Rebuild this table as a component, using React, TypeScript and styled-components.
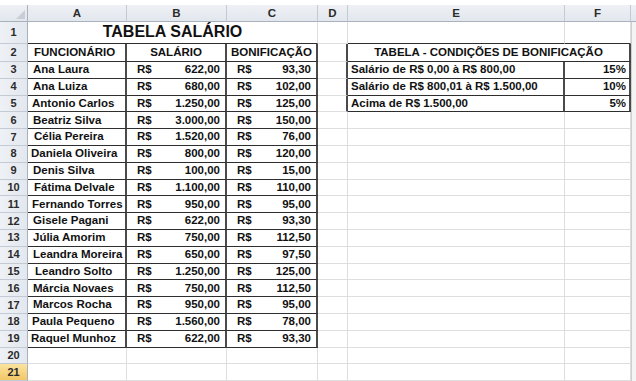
import React from 'react';
import styled, { createGlobalStyle } from 'styled-components';

const GlobalStyle = createGlobalStyle`
	html, body {
		margin: 0;
		padding: 0;
		background: #fff;
		overflow: hidden;
	}
	body {
		font-family: 'Liberation Sans', Arial, sans-serif;
		color: #111;
	}
`;

const DARK_H = '1px solid #2e2e2e';
const DARK_V = '2px solid #4a4a4a';
const GRID = '1px solid #dedede';

const Sheet = styled.table`
	border-collapse: separate;
	border-spacing: 0;
	table-layout: fixed;
	width: 636px;
	margin-top: 5px;
`;

const Row = styled.tr<{ $h: number }>`
	height: ${(p) => p.$h}px;
`;

const ColHead = styled.th`
	background: linear-gradient(#eef1f5, #e2e7ee);
	border-right: 1px solid #c3cad3;
	border-bottom: 1px solid #a9b1bc;
	font-size: 11.5px;
	font-weight: bold;
	color: #2b2b2b;
	text-align: center;
	padding: 0;
`;

const Corner = styled.th`
	position: relative;
	background: linear-gradient(#eef1f5, #e2e7ee);
	border-right: 1px solid #a9b1bc;
	border-bottom: 1px solid #a9b1bc;
	padding: 0;

	svg {
		position: absolute;
		right: 2px;
		bottom: 2px;
	}
`;

const RowHead = styled.th<{ $active?: boolean }>`
	background: ${(p) => (p.$active ? 'linear-gradient(#fbe3a0, #f3c766)' : 'linear-gradient(90deg, #eef1f5, #e3e8ef)')};
	border-right: 1px solid #a9b1bc;
	border-bottom: 1px solid #c3cad3;
	font-size: 11px;
	font-weight: bold;
	color: #2b2b2b;
	text-align: center;
	vertical-align: middle;
	padding: 0;
	line-height: 1;
`;

const Cell = styled.td<{ $r?: boolean; $b?: boolean; $align?: string; $indent?: number }>`
	border-right: ${(p) => (p.$r ? DARK_V : GRID)};
	border-bottom: ${(p) => (p.$b ? DARK_H : GRID)};
	font-size: 11.5px;
	font-weight: bold;
	line-height: 1;
	white-space: nowrap;
	overflow: hidden;
	padding: 0 3px 0 ${(p) => p.$indent ?? 3}px;
	text-align: ${(p) => p.$align ?? 'left'};
	vertical-align: middle;
`;

const Title = styled.td`
	border-right: ${GRID};
	border-bottom: ${DARK_H};
	font-size: 16px;
	font-weight: bold;
	text-align: center;
	vertical-align: bottom;
	padding: 0 0 3px;
	line-height: 1;
`;

const Edge = styled.td`
	background: #f4f4f4;
	border-left: 1px solid #cfcfcf;
	padding: 0;
`;

const EdgeHead = styled.th`
	background: linear-gradient(#eef1f5, #e2e7ee);
	border-bottom: 1px solid #a9b1bc;
	padding: 0;
`;

const Money = styled.div`
	display: flex;
	justify-content: space-between;
	padding: 0 2px 0 7px;
`;

type Person = { name: string; salary: string; bonus: string; indent?: number };

const people: Person[] = [
	{ name: 'Ana Laura', salary: '622,00', bonus: '93,30', indent: 5 },
	{ name: 'Ana Luiza', salary: '680,00', bonus: '102,00', indent: 5 },
	{ name: 'Antonio Carlos', salary: '1.250,00', bonus: '125,00', indent: 4 },
	{ name: 'Beatriz Silva', salary: '3.000,00', bonus: '150,00', indent: 5 },
	{ name: 'Célia Pereira', salary: '1.520,00', bonus: '76,00', indent: 6 },
	{ name: 'Daniela Oliveira', salary: '800,00', bonus: '120,00', indent: 3 },
	{ name: 'Denis Silva', salary: '100,00', bonus: '15,00', indent: 5 },
	{ name: 'Fátima Delvale', salary: '1.100,00', bonus: '110,00', indent: 6 },
	{ name: 'Fernando Torres', salary: '950,00', bonus: '95,00', indent: 4 },
	{ name: 'Gisele Pagani', salary: '622,00', bonus: '93,30', indent: 5 },
	{ name: 'Júlia Amorim', salary: '750,00', bonus: '112,50', indent: 5 },
	{ name: 'Leandra Moreira', salary: '650,00', bonus: '97,50', indent: 5 },
	{ name: 'Leandro Solto', salary: '1.250,00', bonus: '125,00', indent: 7 },
	{ name: 'Márcia Novaes', salary: '750,00', bonus: '112,50', indent: 5 },
	{ name: 'Marcos Rocha', salary: '950,00', bonus: '95,00', indent: 5 },
	{ name: 'Paula Pequeno', salary: '1.560,00', bonus: '78,00', indent: 4 },
	{ name: 'Raquel Munhoz', salary: '622,00', bonus: '93,30', indent: 3 }
];

const conditions = [
	{ label: 'Salário de R$ 0,00 à R$ 800,00', rate: '15%' },
	{ label: 'Salário de R$ 800,01 à R$ 1.500,00', rate: '10%' },
	{ label: 'Acima de R$ 1.500,00', rate: '5%' }
];

const ROW_H = 16.8;

const App = () => {
	const bodyRows = [];
	for (let n = 3; n <= 21; n++) {
		const p = people[n - 3];
		const c = n <= 5 ? conditions[n - 3] : null;
		bodyRows.push(
			<Row key={n} $h={ROW_H}>
				<RowHead $active={n === 21}>{n}</RowHead>
				{p ? (
					<>
						<Cell $r $b $indent={p.indent}>
							{p.name}
						</Cell>
						<Cell $r $b>
							<Money>
								<span>R$</span>
								<span>{p.salary}</span>
							</Money>
						</Cell>
						<Cell $r $b>
							<Money>
								<span>R$</span>
								<span>{p.bonus}</span>
							</Money>
						</Cell>
					</>
				) : (
					<>
						<Cell />
						<Cell />
						<Cell />
					</>
				)}
				<Cell $r={!!c} />
				{c ? (
					<>
						<Cell $r $b>
							{c.label}
						</Cell>
						<Cell $r $b $align='right'>
							{c.rate}
						</Cell>
					</>
				) : (
					<>
						<Cell />
						<Cell />
					</>
				)}
				<Edge />
			</Row>
		);
	}

	return (
		<>
			<GlobalStyle />
			<Sheet>
				<colgroup>
					<col style={{ width: 28 }} />
					<col style={{ width: 99 }} />
					<col style={{ width: 100 }} />
					<col style={{ width: 91 }} />
					<col style={{ width: 30 }} />
					<col style={{ width: 217 }} />
					<col style={{ width: 66 }} />
					<col style={{ width: 5 }} />
				</colgroup>
				<thead>
					<Row $h={17}>
						<Corner>
							<svg width='9' height='9' viewBox='0 0 9 9'>
								<polygon points='9,0 9,9 0,9' fill='#c9ced6' />
							</svg>
						</Corner>
						<ColHead>A</ColHead>
						<ColHead>B</ColHead>
						<ColHead>C</ColHead>
						<ColHead>D</ColHead>
						<ColHead>E</ColHead>
						<ColHead>F</ColHead>
						<EdgeHead />
					</Row>
				</thead>
				<tbody>
					<Row $h={22}>
						<RowHead>1</RowHead>
						<Title colSpan={3}>TABELA SALÁRIO</Title>
						<Cell />
						<Cell $b />
						<Cell $b />
						<Edge />
					</Row>
					<Row $h={18}>
						<RowHead>2</RowHead>
						<Cell $r $b $indent={6}>
							FUNCIONÁRIO
						</Cell>
						<Cell $r $b $align='center'>
							SALÁRIO
						</Cell>
						<Cell $r $b $align='center'>
							BONIFICAÇÃO
						</Cell>
						<Cell $r />
						<Cell $r $b colSpan={2} $align='center'>
							TABELA - CONDIÇÕES DE BONIFICAÇÃO
						</Cell>
						<Edge />
					</Row>
					{bodyRows}
				</tbody>
			</Sheet>
		</>
	);
};

export default App;
